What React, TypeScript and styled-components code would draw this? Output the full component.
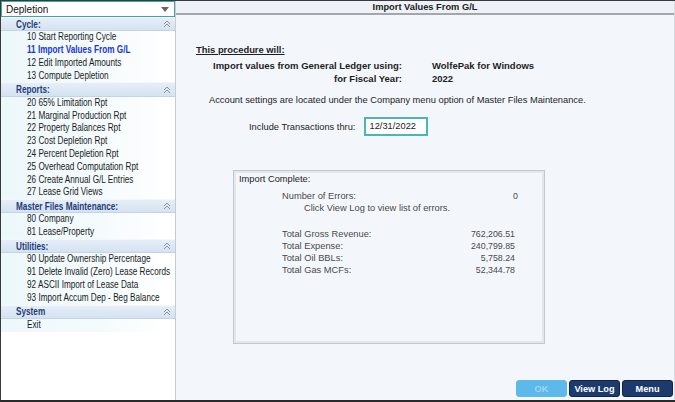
import React from 'react';
import styled, { createGlobalStyle } from 'styled-components';

const GlobalStyle = createGlobalStyle`
  html, body {
    margin: 0;
    padding: 0;
    background: #ffffff;
  }
  body {
    font-family: "Liberation Sans", Arial, sans-serif;
  }
  * {
    box-sizing: border-box;
  }
`;

const Frame = styled.div`
  width: 675px;
  height: 402px;
  display: flex;
  border-left: 1px solid #3a3a3a;
  border-top: 1px solid #3a3a3a;
  border-bottom: 2px solid #2a2a2a;
  overflow: hidden;
`;

const Sidebar = styled.div`
  width: 175px;
  flex-shrink: 0;
  display: flex;
  flex-direction: column;
  background: #ffffff;
  border-right: 1px solid #c8ccd1;
  overflow: hidden;
`;

const Dropdown = styled.div`
  height: 16px;
  display: flex;
  align-items: center;
  justify-content: space-between;
  padding: 0 4px 0 4px;
  border: 1px solid #3fa6a3;
  background: #ffffff;
  font-size: 10px;
  color: #111;
`;

const Arrow = styled.span`
  width: 0;
  height: 0;
  border-left: 4px solid transparent;
  border-right: 4px solid transparent;
  border-top: 5px solid #666;
  margin-right: 1px;
`;

// the menu uses a narrow face; Arial Narrow is not installed, so squeeze Arial
const Narrow = styled.span`
  display: inline-block;
  white-space: nowrap;
  transform: scaleX(0.82);
  transform-origin: left center;
`;

const SectionHeader = styled.div`
  height: 14.3px;
  display: flex;
  align-items: center;
  justify-content: space-between;
  padding: 0 4px 0 15px;
  background: linear-gradient(#e6eef8, #d5e2f1);
  border-top: 1px solid #f4f8fc;
  border-bottom: 1px solid #c5d3e6;
  font-size: 10px;
  font-weight: 700;
  color: #1d3d7b;
`;

const ItemList = styled.div`
  display: flex;
  flex-direction: column;
  background: linear-gradient(90deg, #edf8fb 0%, #f5fbfd 60%, #ffffff 95%);
`;

const Item = styled.div<{ active?: boolean }>`
  height: 12.8px;
  line-height: 12.8px;
  padding-left: 26px;
  font-size: 10px;
  white-space: nowrap;
  color: ${({ active }) => (active ? '#1a35d6' : '#1b1b1b')};
  font-weight: ${({ active }) => (active ? 700 : 400)};
  text-decoration: ${({ active }) => (active ? 'underline' : 'none')};
`;

const Main = styled.div`
  flex: 1;
  display: flex;
  flex-direction: column;
  background: #f3f7fc;
  border-right: 1px solid #d7dbe0;
`;

const TitleBar = styled.div`
  height: 14px;
  line-height: 12px;
  text-align: center;
  font-size: 9.3px;
  font-weight: 700;
  color: #222;
  background: #eef2f8;
  border-bottom: 2px solid #a3a7ac;
`;

const Content = styled.div`
  flex: 1;
  display: flex;
  flex-direction: column;
  padding-top: 28px;
`;

const ProcedureTitle = styled.div`
  margin-left: 20px;
  font-size: 9.4px;
  font-weight: 700;
  color: #1d1d1d;
  text-decoration: underline;
  line-height: 14px;
`;

const InfoGrid = styled.div`
  display: grid;
  grid-template-columns: 226px auto;
  column-gap: 30px;
  margin-top: 2px;
  font-size: 9.5px;
  font-weight: 700;
  color: #1d1d1d;
  line-height: 13px;
`;

const InfoLabel = styled.div`
  text-align: right;
  white-space: nowrap;
`;

const Note = styled.div`
  margin-top: 8px;
  margin-left: 33px;
  font-size: 9.3px;
  color: #1d1d1d;
  line-height: 14px;
  white-space: nowrap;
`;

const DateRow = styled.div`
  margin-top: 10px;
  margin-left: 73px;
  display: flex;
  align-items: center;
  gap: 9px;
  font-size: 9.3px;
  color: #1d1d1d;
`;

const DateInput = styled.div`
  width: 64px;
  height: 19px;
  line-height: 15px;
  padding-left: 3px;
  border: 2px solid #4bb8b0;
  background: #ffffff;
  font-size: 9.3px;
  color: #1d1d1d;
`;

const ResultBox = styled.div`
  margin-top: 34px;
  margin-left: 57px;
  width: 312px;
  height: 174px;
  border: 1px solid #c4c7cb;
  box-shadow: inset 0 0 0 2px #e4e7eb;
  padding: 2px 0 0 5px;
`;

const BoxTitle = styled.div`
  font-size: 9.3px;
  color: #1d1d1d;
  line-height: 13px;
`;

const StatsGrid = styled.div<{ gapTop: number }>`
  display: grid;
  grid-template-columns: 1fr auto;
  margin-top: ${({ gapTop }) => gapTop}px;
  padding-left: 43px;
  padding-right: 29px;
  font-size: 9.3px;
  color: #4a4a4a;
  line-height: 11.7px;
`;

const StatValue = styled.div<{ shift?: number }>`
  text-align: right;
  font-size: 8.8px;
  margin-right: ${({ shift }) => (shift ? -shift : 0)}px;
`;

const Hint = styled.div`
  grid-column: 1 / span 2;
  padding-left: 22px;
`;

const ButtonBar = styled.div`
  display: flex;
  justify-content: flex-end;
  gap: 2px;
  padding: 0 1px 3px 0;
`;

const Button = styled.div<{ disabled?: boolean }>`
  width: 51px;
  height: 17px;
  display: flex;
  align-items: center;
  justify-content: center;
  border-radius: 3px;
  font-size: 9.2px;
  font-weight: 700;
  background: ${({ disabled }) => (disabled ? '#5cb9ea' : '#1c3a6c')};
  color: ${({ disabled }) => (disabled ? '#9fd6f3' : '#ffffff')};
  border: 1px solid ${({ disabled }) => (disabled ? '#5cb9ea' : '#0f2548')};
`;

const Collapse = () => (
  <svg width="8" height="8" viewBox="0 0 8 8">
    <path d="M1 4 L4 1 L7 4 M1 7 L4 4 L7 7" fill="none" stroke="#8a93a3" strokeWidth="1" />
  </svg>
);

interface Section {
  title: string;
  items: string[];
}

const sections: Section[] = [
  {
    title: 'Cycle:',
    items: ['10 Start Reporting Cycle', '11 Import Values From G/L', '12 Edit Imported Amounts', '13 Compute Depletion'],
  },
  {
    title: 'Reports:',
    items: [
      '20 65% Limitation Rpt',
      '21 Marginal Production Rpt',
      '22 Property Balances Rpt',
      '23 Cost Depletion Rpt',
      '24 Percent Depletion Rpt',
      '25 Overhead Computation Rpt',
      '26 Create Annual G/L Entries',
      '27 Lease Grid Views',
    ],
  },
  { title: 'Master Files Maintenance:', items: ['80 Company', '81 Lease/Property'] },
  {
    title: 'Utilities:',
    items: [
      '90 Update Ownership Percentage',
      '91 Delete Invalid (Zero) Lease Records',
      '92 ASCII Import of Lease Data',
      '93 Import Accum Dep - Beg Balance',
    ],
  },
  { title: 'System', items: ['Exit'] },
];

const totals = [
  ['Total Gross Revenue:', '762,206.51'],
  ['Total Expense:', '240,799.85'],
  ['Total Oil BBLs:', '5,758.24'],
  ['Total Gas MCFs:', '52,344.78'],
];

export default function App() {
  return (
    <>
      <GlobalStyle />
      <Frame>
        <Sidebar>
          <Dropdown>
            <span>Depletion</span>
            <Arrow />
          </Dropdown>
          {sections.map((s) => (
            <React.Fragment key={s.title}>
              <SectionHeader>
                <Narrow>{s.title}</Narrow>
                <Collapse />
              </SectionHeader>
              <ItemList>
                {s.items.map((it) => (
                  <Item key={it} active={it.startsWith('11 ')}>
                    <Narrow>{it}</Narrow>
                  </Item>
                ))}
              </ItemList>
            </React.Fragment>
          ))}
        </Sidebar>
        <Main>
          <TitleBar>Import Values From G/L</TitleBar>
          <Content>
            <ProcedureTitle>This procedure will:</ProcedureTitle>
            <InfoGrid>
              <InfoLabel>Import values from General Ledger using:</InfoLabel>
              <div>WolfePak for Windows</div>
              <InfoLabel>for Fiscal Year:</InfoLabel>
              <div>2022</div>
            </InfoGrid>
            <Note>Account settings are located under the Company menu option of Master Files Maintenance.</Note>
            <DateRow>
              <span>Include Transactions thru:</span>
              <DateInput>12/31/2022</DateInput>
            </DateRow>
            <ResultBox>
              <BoxTitle>Import Complete:</BoxTitle>
              <StatsGrid gapTop={5}>
                <div>Number of Errors:</div>
                <StatValue shift={3}>0</StatValue>
                <Hint>Click View Log to view list of errors.</Hint>
              </StatsGrid>
              <StatsGrid gapTop={15}>
                {totals.map(([label, value]) => (
                  <React.Fragment key={label}>
                    <div>{label}</div>
                    <StatValue>{value}</StatValue>
                  </React.Fragment>
                ))}
              </StatsGrid>
            </ResultBox>
          </Content>
          <ButtonBar>
            <Button disabled>OK</Button>
            <Button>View Log</Button>
            <Button>Menu</Button>
          </ButtonBar>
        </Main>
      </Frame>
    </>
  );
}
